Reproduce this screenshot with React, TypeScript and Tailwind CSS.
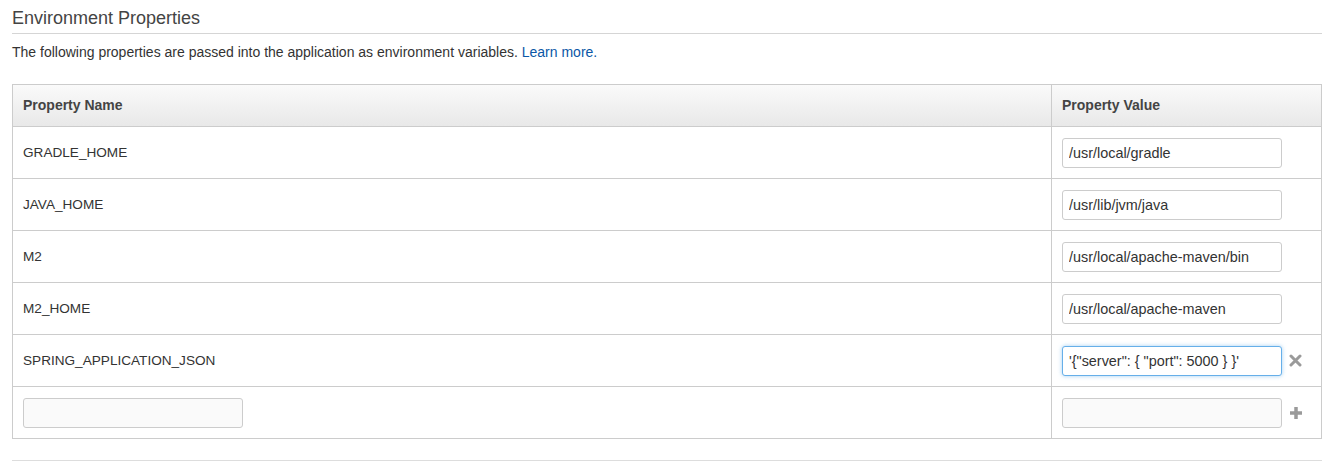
import React from "react";

const rows = [
  { name: "GRADLE_HOME", value: "/usr/local/gradle" },
  { name: "JAVA_HOME", value: "/usr/lib/jvm/java" },
  { name: "M2", value: "/usr/local/apache-maven/bin" },
  { name: "M2_HOME", value: "/usr/local/apache-maven" },
  { name: "SPRING_APPLICATION_JSON", value: `'{"server": { "port": 5000 } }'`, focused: true },
];

export default function App() {
  return (
    <div className="bg-white w-[1339px] h-[461px] overflow-hidden text-[#333]" style={{ fontFamily: '"Liberation Sans", Arial, sans-serif' }}>
      <div className="pl-[12px] pr-[17px]">
        <div className="pt-[8px] pb-[5px] border-b border-[#d5d5d5]">
          <h2 className="text-[18px] leading-[20px] text-[#444] font-normal">Environment Properties</h2>
        </div>
        <p className="text-[14px] leading-[16px] mt-[10px] text-[#333]">
          The following properties are passed into the application as environment variables.{" "}
          <a className="text-[#0b57a6]">Learn more.</a>
        </p>
        <table className="mt-[24px] w-[1310px] border-collapse border border-[#ccc] text-[13.6px]">
          <thead>
            <tr className="h-[42px] bg-gradient-to-b from-[#fafafa] to-[#e8e8e8]">
              <th className="text-left font-bold pl-[10px] border border-[#ccc] text-[#444] text-[14px]">Property Name</th>
              <th className="text-left font-bold pl-[10px] border border-[#ccc] w-[270px] text-[#444] text-[14px]">Property Value</th>
            </tr>
          </thead>
          <tbody>
            {rows.map((r) => (
              <tr key={r.name} className="h-[52px]">
                <td className="pl-[10px] pt-[1px] border border-[#ccc] text-[#333]">{r.name}</td>
                <td className="pl-[10px] border border-[#ccc]">
                  <div className="flex items-center">
                    <input
                      readOnly
                      value={r.value}
                      className={
                        r.focused
                          ? "w-[220px] h-[30px] rounded-[3px] border border-[#66afe9] shadow-[0_0_4px_rgba(102,175,233,0.6)] px-[6px] text-[14.4px] text-[#333] outline-none bg-white"
                          : "w-[220px] h-[30px] rounded-[3px] border border-[#ccc] px-[6px] text-[14.4px] text-[#333] outline-none bg-white"
                      }
                      style={{ fontFamily: '"Liberation Sans", Arial, sans-serif' }}
                    />
                    {r.focused && (
                      <svg className="ml-[7px]" width="13" height="13" viewBox="0 0 13 13">
                        <path d="M2 2 L11 11 M11 2 L2 11" stroke="#9a9a9a" strokeWidth="3" strokeLinecap="round" />
                      </svg>
                    )}
                  </div>
                </td>
              </tr>
            ))}
            <tr className="h-[52px]">
              <td className="pl-[10px] border border-[#ccc]">
                <input className="w-[220px] h-[30px] rounded-[3px] border border-[#ccc] bg-[#fafafa] outline-none" />
              </td>
              <td className="pl-[10px] border border-[#ccc]">
                <div className="flex items-center">
                  <input className="w-[220px] h-[30px] rounded-[3px] border border-[#ccc] bg-[#fafafa] outline-none" />
                  <svg className="ml-[7px]" width="14" height="14" viewBox="0 0 14 14">
                    <path d="M7 1 V13 M1 7 H13" stroke="#9a9a9a" strokeWidth="3.5" />
                  </svg>
                </div>
              </td>
            </tr>
          </tbody>
        </table>
        <div className="mt-[21px] border-b border-[#ddd]" />
      </div>
    </div>
  );
}
